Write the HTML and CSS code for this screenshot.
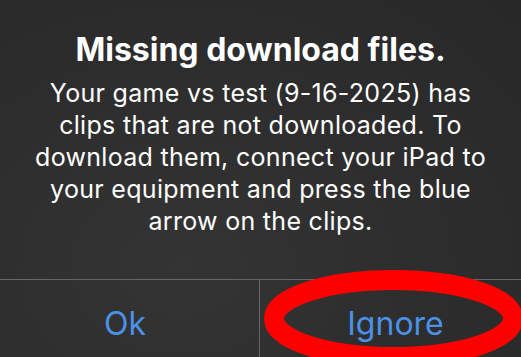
FILE: index.html
```html
<!DOCTYPE html>
<html lang="en">
<head>
<meta charset="utf-8">
<title>Missing download files</title>
<link rel="stylesheet" href="styles.css">
</head>
<body>
<div class="alert">
  <div class="content">
    <h1 class="title">Missing download files.</h1>
    <p class="message">Your game vs test (9-16-2025) has<br>clips that are not downloaded. To<br>download them, connect your iPad to<br>your equipment and press the blue<br>arrow on the clips.</p>
  </div>
  <div class="actions">
    <button class="action action-ok">Ok</button>
    <button class="action action-ignore">Ignore</button>
  </div>
  <svg class="annotation" width="521" height="357" viewBox="0 0 521 357" aria-hidden="true">
    <ellipse cx="393.5" cy="318.5" rx="119.5" ry="38.5" fill="none" stroke="#ff0000" stroke-width="20"/>
  </svg>
</div>
</body>
</html>
```

FILE: styles.css
```css
html, body {
  margin: 0;
  padding: 0;
}
body {
  width: 521px;
  height: 357px;
  overflow: hidden;
  background: #2c2c2c;
  font-family: "Inter", "Noto Sans", sans-serif;
}
.alert {
  position: relative;
  width: 521px;
  height: 357px;
  background: radial-gradient(ellipse at 35% 75%, #343434 0%, #2e2e2e 45%, #282828 100%);
  display: flex;
  flex-direction: column;
}
.content {
  padding: 31px 0 42px;
  display: flex;
  flex-direction: column;
  align-items: center;
  gap: 8px;
  text-align: center;
  color: #ffffff;
}
.title {
  margin: 0;
  font-size: 32px;
  line-height: 38px;
  font-weight: 700;
}
.message {
  margin: 0;
  font-size: 25px;
  line-height: 32px;
  font-weight: 400;
  letter-spacing: 0.3px;
  white-space: nowrap;
}
.actions {
  border-top: 1px solid #676767;
  display: grid;
  grid-template-columns: 259px 1fr;
  flex: 1;
}
.action {
  background: none;
  border: 0;
  margin: 0;
  padding: 25px 0 0;
  font-family: inherit;
  font-size: 32px;
  line-height: 38px;
  color: #4b91e8;
  display: flex;
  justify-content: center;
  align-items: flex-start;
}
.action-ok {
  padding-right: 9px;
}
.action-ignore {
  border-left: 1px solid #676767;
  padding-left: 10px;
}
.annotation {
  position: absolute;
  left: 0;
  top: 0;
  pointer-events: none;
}
```
